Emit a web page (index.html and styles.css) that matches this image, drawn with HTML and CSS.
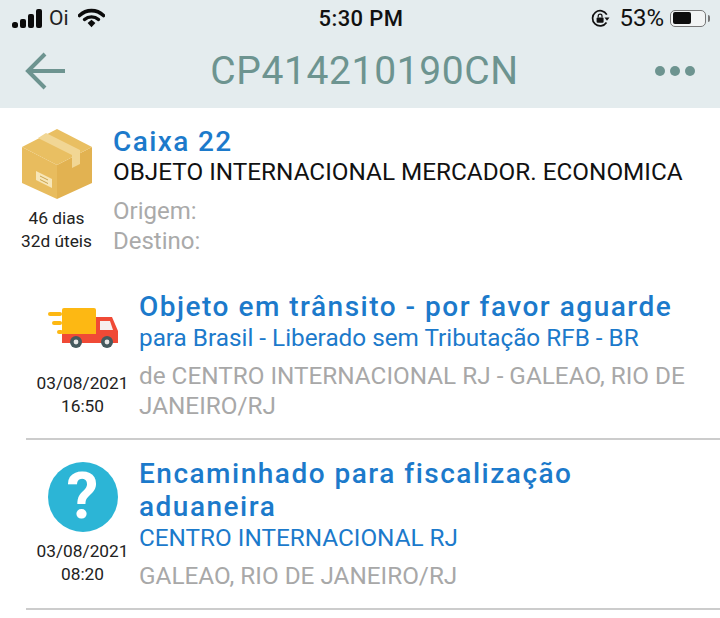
FILE: index.html
```html
<!DOCTYPE html>
<html lang="pt">
<head>
    <meta charset="UTF-8">
    <title>CP414210190CN</title>
    <link rel="stylesheet" href="styles.css">
</head>
<body>
    <div class="top">
        <div class="status-bar">
            <div class="status-left">
                <svg class="signal" width="30" height="19" viewBox="0 0 30 19">
                    <rect x="0" y="13" width="6" height="6" rx="2.5" fill="#0b0b0b"/>
                    <rect x="8" y="10" width="6" height="9" rx="2" fill="#0b0b0b"/>
                    <rect x="16" y="5" width="6" height="14" rx="2" fill="#0b0b0b"/>
                    <rect x="24" y="0" width="6" height="19" rx="2" fill="#0b0b0b"/>
                </svg>
                <span class="carrier">Oi</span>
                <svg class="wifi" width="27" height="20" viewBox="0 0 27 20">
                    <path d="M1.500 7.500C8.500 1 18.500 1 25.500 7.500" fill="none" stroke="#0b0b0b" stroke-width="3.600" stroke-linecap="round"/>
                    <path d="M6.500 11.500C10.500 8 16.500 8 20.500 11.500" fill="none" stroke="#0b0b0b" stroke-width="3.400" stroke-linecap="round"/>
                    <path d="M9.600 15L13.500 11.800L17.400 15L13.500 19.200Z" fill="#0b0b0b"/>
                </svg>
            </div>
            <div class="status-time">5:30 PM</div>
            <div class="status-right">
                <svg class="lock" width="19" height="19" viewBox="0 0 19 19">
                    <path d="M15.500 13.500A7.600 7.600 0 1 1 15.800 5.600" fill="none" stroke="#111" stroke-width="1.700"/>
                    <path d="M13.500 8.500h5l-2.500 3.200Z" fill="#111"/>
                    <rect x="5.600" y="8.500" width="7" height="5.200" rx="1" fill="#111"/>
                    <path d="M7.200 8.500V7a1.900 1.900 0 0 1 3.800 0v1.500" fill="none" stroke="#111" stroke-width="1.200"/>
                </svg>
                <span class="battery-pct">53%</span>
                <div class="battery"><div class="battery-fill"></div></div>
                <div class="battery-tip"></div>
            </div>
        </div>
        <div class="nav-bar">
            <svg class="back" width="42" height="40" viewBox="0 0 42 40">
                <path d="M40 20H4M20 3L3 20L20 37" fill="none" stroke="#6d9490" stroke-width="4"/>
            </svg>
            <h1 class="code">CP414210190CN</h1>
            <div class="more"><span></span><span></span><span></span></div>
        </div>
    </div>

    <div class="summary">
        <div class="summary-left">
            <svg class="box" width="70" height="70" viewBox="0 0 70 70">
                <path d="M0 18L35 36V70L0 54Z" fill="#e8bc5e"/>
                <path d="M35 36L70 18V54L35 70Z" fill="#e2b251"/>
                <path d="M35 0L70 18L35 36L0 18Z" fill="#e9bf62"/>
                <path d="M16 9L24 4L58 21V35L50 39V26Z" fill="#f1d694"/>
                <path d="M14 42L30 50V59L14 51Z" fill="#f7e6b8"/>
                <path d="M18 47L26 51M18 50.500L26 54.500" stroke="#c9a24c" stroke-width="1"/>
            </svg>
            <div class="age">46 dias</div>
            <div class="age">32d úteis</div>
        </div>
        <div class="summary-text">
            <div class="name">Caixa 22</div>
            <div class="kind">OBJETO INTERNACIONAL MERCADOR. ECONOMICA</div>
            <div class="place first">Origem:</div>
            <div class="place">Destino:</div>
        </div>
    </div>

    <div class="event first-event">
        <div class="event-left">
            <svg class="truck" width="70" height="40" viewBox="0 0 70 40">
                <rect x="0" y="4" width="14" height="4" rx="2" fill="#fdb813"/>
                <rect x="4" y="13" width="10" height="4" rx="2" fill="#fdb813"/>
                <rect x="9" y="22" width="6" height="4" rx="2" fill="#fdb813"/>
                <path d="M14 26H48V9H64L70 23V35H14Z" fill="#f04a36"/>
                <path d="M52 13H62L65 22H52Z" fill="#f6eeee"/>
                <path d="M14 2a2 2 0 0 1 2-2H46a2 2 0 0 1 2 2V26H14Z" fill="#fdb813"/>
                <circle cx="28" cy="34" r="6" fill="#455a5e"/>
                <circle cx="28" cy="34" r="2.400" fill="#e8e8e8"/>
                <circle cx="59" cy="34" r="6" fill="#455a5e"/>
                <circle cx="59" cy="34" r="2.400" fill="#e8e8e8"/>
            </svg>
            <div class="stamp">03/08/2021</div>
            <div class="stamp">16:50</div>
        </div>
        <div class="event-text">
            <div class="event-title">Objeto em trânsito - por favor aguarde</div>
            <div class="event-sub">para Brasil - Liberado sem Tributação RFB - BR</div>
            <div class="event-place">de CENTRO INTERNACIONAL RJ - GALEAO, RIO DE JANEIRO/RJ</div>
        </div>
    </div>

    <div class="event second-event">
        <div class="event-left">
            <div class="question">?</div>
            <div class="stamp">03/08/2021</div>
            <div class="stamp">08:20</div>
        </div>
        <div class="event-text">
            <div class="event-title">Encaminhado para fiscalização aduaneira</div>
            <div class="event-sub">CENTRO INTERNACIONAL RJ</div>
            <div class="event-place">GALEAO, RIO DE JANEIRO/RJ</div>
        </div>
    </div>
</body>
</html>
```

FILE: styles.css
```css
body {
    margin: 0;
    height: 618px;
    overflow: hidden;
    background-color: white;
    font-family: Roboto, "Liberation Sans", sans-serif;
}
.top {
    background-color: #e4ecee;
    height: 108px;
}
.status-bar {
    display: grid;
    grid-template-columns: 1fr auto 1fr;
    align-items: center;
    height: 36px;
    padding: 0 10px 0 12px;
}
.status-left {
    display: flex;
    align-items: center;
}
.signal {
    margin-right: 7px;
}
.carrier {
    font-size: 21px;
    color: #222;
    margin-right: 9px;
}
.status-time {
    font-size: 22px;
    font-weight: 500;
    color: #111;
    letter-spacing: 0.4px;
}
.status-right {
    display: flex;
    align-items: center;
    justify-content: flex-end;
}
.lock {
    margin-right: 9px;
}
.battery-pct {
    font-size: 24px;
    color: #111;
    margin-right: 6px;
}
.battery {
    width: 30px;
    height: 12px;
    border: 1.500px solid #777;
    border-radius: 5px;
    background-color: #f2f4f4;
    padding: 1.500px 2px;
}
.battery-fill {
    width: 18px;
    height: 12px;
    border-radius: 2px;
    background-color: #0d0d0d;
}
.battery-tip {
    width: 2px;
    height: 7px;
    margin-left: 2px;
    background-color: #777;
    border-radius: 0 2px 2px 0;
}
.nav-bar {
    display: flex;
    align-items: center;
    justify-content: space-between;
    height: 70px;
    padding: 0 25px;
}
.code {
    margin: 0 0 0 7px;
    font-size: 39px;
    font-weight: 400;
    color: #6d9490;
    letter-spacing: 0.6px;
}
.more {
    display: flex;
    gap: 5px;
}
.more span {
    width: 10px;
    height: 10px;
    border-radius: 50%;
    background-color: #6d9490;
}
.summary {
    display: flex;
    padding: 19px 0 0 20px;
}
.summary-left {
    width: 73px;
    margin-right: 20px;
    display: flex;
    flex-direction: column;
    align-items: center;
}
.box {
    margin-top: 2px;
    margin-bottom: 8px;
}
.age {
    font-size: 17.300px;
    line-height: 23px;
    color: #222;
    white-space: nowrap;
}
.name {
    font-size: 28px;
    font-weight: 500;
    line-height: 30px;
    color: #1c7acb;
    letter-spacing: 1.400px;
}
.kind {
    font-size: 24.300px;
    line-height: 30px;
    color: #111;
    white-space: nowrap;
}
.place {
    font-size: 24px;
    line-height: 30px;
    color: #aaa;
}
.place.first {
    margin-top: 9px;
}
.event {
    display: flex;
    margin-left: 26px;
    border-bottom: 2px solid #ccc;
}
.first-event {
    padding-top: 32px;
    padding-bottom: 17px;
}
.second-event {
    padding-top: 16px;
    padding-bottom: 17px;
}
.first-event .event-text {
    margin-top: 2px;
}
.second-event .event-text {
    margin-top: 1px;
}
.event-left {
    width: 113px;
    flex-shrink: 0;
    display: flex;
    flex-direction: column;
    align-items: center;
}
.truck {
    margin-top: 20px;
    margin-bottom: 24px;
}
.question {
    width: 70px;
    height: 70px;
    border-radius: 50%;
    background-color: #2cb5d6;
    color: white;
    font-size: 64px;
    font-weight: 700;
    line-height: 70px;
    text-align: center;
    margin-top: 6px;
    margin-bottom: 8px;
}
.stamp {
    font-size: 17.300px;
    line-height: 23px;
    color: #222;
}
.event-text {
    flex: 1;
    padding-right: 30px;
}
.event-title {
    font-size: 28px;
    font-weight: 500;
    line-height: 33px;
    color: #1c7acb;
    letter-spacing: 1.500px;
}
.event-sub {
    font-size: 24.300px;
    line-height: 30px;
    color: #1c7acb;
}
.event-place {
    font-size: 24.300px;
    line-height: 30px;
    color: #a8a8a8;
    margin-top: 8px;
}
```
